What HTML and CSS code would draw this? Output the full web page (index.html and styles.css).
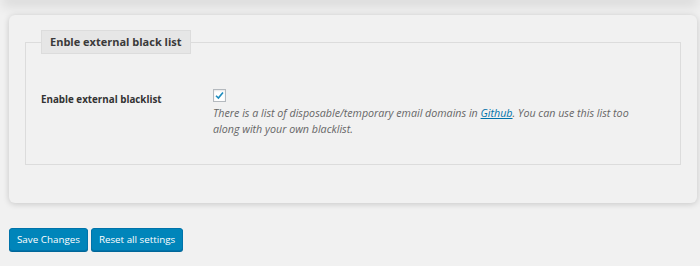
FILE: index.html
```html
<!DOCTYPE html>
<html>
<head>
<meta charset="utf-8">
<link rel="stylesheet" href="styles.css">
</head>
<body>
<div class="prev-card"></div>
<div class="card">
  <fieldset class="group">
    <legend class="group-title">Enble external black list</legend>
    <div class="row">
      <div class="row-label">Enable external blacklist</div>
      <div class="row-field">
        <span class="check"><svg viewBox="0 0 12 12" width="11" height="11"><path d="M2.2 6.3 L4.8 8.8 L9.8 2.8" fill="none" stroke="#1e8cbe" stroke-width="1.8"/></svg></span>
        <p class="desc">There is a list of disposable/temporary email domains in <a href="#">Github</a>. You can use this list too along with your own blacklist.</p>
      </div>
    </div>
  </fieldset>
</div>
<div class="actions">
  <button class="btn">Save Changes</button>
  <button class="btn">Reset all settings</button>
</div>
</body>
</html>
```
FILE: styles.css
```css
html, body {
  margin: 0;
  padding: 0;
  background: #f1f1f1;
  font-family: "Open Sans", "Noto Sans", sans-serif;
  color: #333;
  overflow: hidden;
}
body {
  width: 700px;
  height: 266px;
}
.prev-card {
  height: 0;
  margin: 0 9px;
  box-shadow: 0 0 12px 7px rgba(0,0,0,0.09);
}
.card {
  margin: 15px 3px 0 9px;
  height: 188px;
  box-sizing: border-box;
  border-radius: 6px;
  background: #f1f1f1;
  box-shadow: 0 1px 6px rgba(0,0,0,0.18);
  padding: 15px 16px 0 16px;
}
.group {
  margin: 0;
  border: 1px solid #dcdcdc;
  padding: 0 15px 0 15px;
  height: 135px;
  box-sizing: border-box;
}
.group-title {
  margin-left: 0;
  padding: 3px 8px 4px 8px;
  background: #e6e6e6;
  border: 1px solid #dcdcdc;
  font-size: 11px;
  font-weight: 700;
  color: #3a3a3a;
  line-height: 15px;
  white-space: nowrap;
}
.row {
  display: flex;
  margin-top: 35px;
}
.row-label {
  width: 172px;
  font-size: 9.8px;
  font-weight: 700;
  color: #333;
  padding-top: 4px;
}
.row-field {
  flex: 1;
}
.check {
  display: block;
  width: 11px;
  height: 11px;
  border: 1px solid #b4b9be;
  background: #fff;
  box-shadow: inset 0 1px 2px rgba(0,0,0,0.1);
  line-height: 0;
}
.desc {
  margin: 3px 0 0 0;
  font-size: 10.7px;
  font-style: italic;
  color: #666;
  line-height: 16px;
  width: 440px;
}
.desc a {
  color: #0073aa;
}
.actions {
  display: flex;
  gap: 3px;
  margin: 25px 0 0 9px;
}
.btn {
  font-family: "Open Sans", "Noto Sans", sans-serif;
  font-size: 9.8px;
  color: #fff;
  background: #0085ba;
  border: 1px solid #0073aa;
  border-radius: 3px;
  height: 23px;
  padding: 0 7px;
  box-shadow: 0 1px 0 #006799;
}
```
